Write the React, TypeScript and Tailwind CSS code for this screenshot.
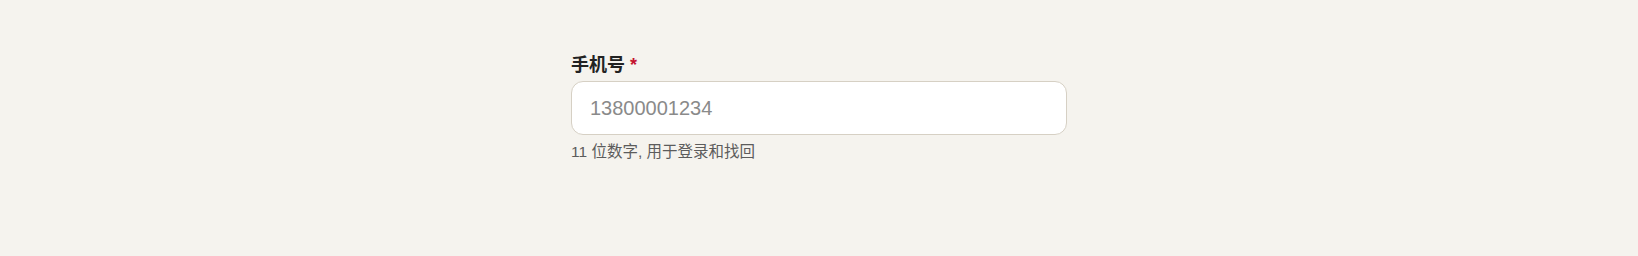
export default function App() {
  return (
    <div
      className="min-h-screen bg-[#f5f3ee] flex justify-center pt-[53px]"
      style={{ fontFamily: '"Liberation Sans", "Noto Sans CJK SC", sans-serif' }}
    >
      <div className="w-[496px] flex flex-col">
        <label htmlFor="phone" className="text-[18px] leading-[24px] font-bold text-[#222222] mb-1">
          手机号 <span className="text-[#c4122f]">*</span>
        </label>
        <input
          id="phone"
          type="tel"
          placeholder="13800001234"
          className="h-[54px] w-full rounded-xl border border-[#d6d0c4] bg-white px-[18px] text-[20px] text-[#333333] placeholder:text-[#8a8a8a] outline-none"
        />
        <p className="mt-[6px] text-[15.5px] leading-[22px] text-[#5c5c5c]">11 位数字, 用于登录和找回</p>
      </div>
    </div>
  );
}
